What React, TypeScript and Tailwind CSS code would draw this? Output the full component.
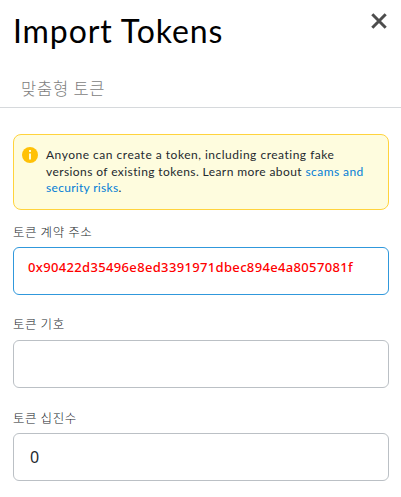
import React, { useState } from 'react';

const inputClass =
  "block h-12 w-full rounded-md border bg-white outline-none";

const labelClass =
  "block h-4 text-[12.5px] leading-4 tracking-[0.6px] font-light text-[#24292e] font-['Noto_Sans_CJK_KR',sans-serif]";

const InfoIcon = () => (
  <svg className="mt-[5px] h-4 w-4 shrink-0" viewBox="0 0 16 16">
    <circle cx="8" cy="8" r="8" fill="#ffc107" />
    <rect x="7" y="3" width="2" height="2" fill="#fffbdc" />
    <rect x="7" y="6.5" width="2" height="6" fill="#fffbdc" />
  </svg>
);

const ImportTokens = () => {
  const [address, setAddress] = useState('0x90422d35496e8ed3391971dbec894e4a8057081f');
  const [symbol, setSymbol] = useState('');
  const [decimals, setDecimals] = useState('0');

  return (
    <div className="h-[497px] w-[401px] overflow-hidden bg-white font-['Lato',sans-serif]">
      {/* Header */}
      <header className="flex h-[107px] flex-col justify-between">
        <div className="flex items-start justify-between pl-[13px] pr-[14px]">
          <h1 className="mt-[9px] whitespace-nowrap text-[32px] leading-[44px] tracking-[0.9px] text-black">
            Import Tokens
          </h1>
          <button className="mt-[13px]" aria-label="Close">
            <svg className="h-4 w-4" viewBox="0 0 16 16" stroke="#4d4d4d" strokeWidth="3">
              <path d="M1.3 1.3 L14.7 14.7 M14.7 1.3 L1.3 14.7" />
            </svg>
          </button>
        </div>
        <div className="pb-[7px] pl-[21px] text-[16.5px] leading-6 tracking-[0.8px] font-light text-[#7d7d7d] font-['Noto_Sans_CJK_KR',sans-serif]">
          맞춤형 토큰
        </div>
      </header>

      <main className="border-t border-[#d6d9dc] pl-[13px] pr-3 pt-[26px]">
        {/* Scam warning */}
        <div className="flex h-[76px] gap-2 rounded-lg border border-[#ffd33d] bg-[#fefcde] pl-2 pt-[7px]">
          <InfoIcon />
          <p className="whitespace-nowrap pt-[5px] text-[12px] leading-[16.5px] tracking-[0.3px] text-[#24292e]">
            <span className="tracking-[0.5px]">Anyone can create a token, including creating fake</span><br />
            <span className="tracking-[0.41px]">versions of existing tokens. Learn more about <a className="text-[#037dd6]">scams and</a></span><br />
            <a className="text-[#037dd6]">security risks</a>.
          </p>
        </div>

        {/* Token fields */}
        <div className="pt-[14px]">
          <label className={labelClass} htmlFor="address">토큰 계약 주소</label>
          <input
            id="address"
            className={`${inputClass} mt-[7px] border-[#3098dc] pb-[8px] pl-[14px] text-[13px] font-medium tracking-[0.34px] text-[#ff0000] font-['Noto_Sans',sans-serif]`}
            value={address}
            onChange={(e) => setAddress(e.target.value)}
          />
        </div>
        <div className="pt-[21px]">
          <label className={labelClass} htmlFor="symbol">토큰 기호</label>
          <input
            id="symbol"
            className={`${inputClass} mt-[8px] border-[#bbc0c5] px-4`}
            value={symbol}
            onChange={(e) => setSymbol(e.target.value)}
          />
        </div>
        <div className="pt-[22px]">
          <label className={labelClass} htmlFor="decimals">토큰 십진수</label>
          <input
            id="decimals"
            className={`${inputClass} mt-[7px] border-[#bbc0c5] px-4 text-[16px] text-[#24292e] font-['Noto_Sans',sans-serif]`}
            value={decimals}
            onChange={(e) => setDecimals(e.target.value)}
          />
        </div>
      </main>
    </div>
  );
};

export default ImportTokens;
